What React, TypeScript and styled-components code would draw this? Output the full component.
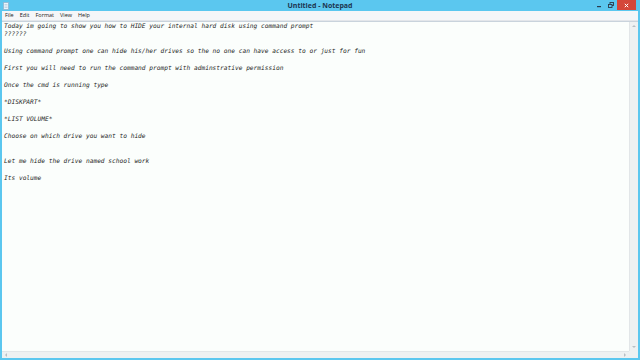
import React from "react";
import styled, { createGlobalStyle } from "styled-components";

const Global = createGlobalStyle`
  html, body { margin: 0; padding: 0; width: 640px; height: 360px; overflow: hidden; background: #5bc7ef; }
  #root { width: 640px; height: 360px; }
`;

const Window = styled.div`
  width: 640px;
  height: 360px;
  display: flex;
  flex-direction: column;
  background: #5bc7ef;
  font-family: "Open Sans", "Liberation Sans", sans-serif;
  box-sizing: border-box;
  padding: 0 2px 2px 2px;
`;

const TitleBar = styled.div`
  height: 11px;
  flex: none;
  display: grid;
  grid-template-columns: 60px 1fr 60px;
  align-items: center;
  margin: 0 -2px;
`;

const AppIcon = styled.div`
  display: flex;
  align-items: center;
  padding-left: 3px;
`;

const Title = styled.div`
  text-align: center;
  font-size: 7px;
  font-weight: 700;
  color: #1c3550;
  line-height: 11px;
`;

const Controls = styled.div`
  display: flex;
  justify-content: flex-end;
  align-items: flex-start;
  height: 11px;
  padding-right: 4px;
`;

const CtrlButton = styled.div<{ $close?: boolean }>`
  width: ${(p) => (p.$close ? "19px" : "12px")};
  height: 10px;
  background: ${(p) => (p.$close ? "#d4473a" : "transparent")};
  display: flex;
  align-items: center;
  justify-content: center;
`;

const MenuBar = styled.div`
  height: 9px;
  flex: none;
  background: #f5f6f8;
  display: flex;
  align-items: center;
  padding-left: 0;
  border-bottom: 1px solid #e3e6ea;
`;

const MenuItem = styled.span`
  font-size: 5.5px;
  color: #222;
  padding: 0 3px;
  line-height: 9px;
`;

const Body = styled.div`
  flex: 1;
  display: grid;
  grid-template-columns: 1fr 9px;
  grid-template-rows: 1fr 7px;
  background: #fbfefc;
  border-top: 1px solid #c9d3dc;
  min-height: 0;
`;

const TextArea = styled.pre`
  margin: 0;
  padding: 0 2px;
  font-family: "DejaVu Sans Mono", "Liberation Mono", monospace;
  font-style: italic;
  font-size: 6.2px;
  line-height: 8.45px;
  color: #1e1e1e;
  white-space: pre;
  overflow: hidden;
`;

const VScroll = styled.div`
  background: #eef1f2;
  border-left: 1px solid #e2e6e8;
  display: flex;
  flex-direction: column;
  justify-content: space-between;
  align-items: center;
  padding: 3px 0;
`;

const HScroll = styled.div`
  background: #eef1f2;
  border-top: 1px solid #e2e6e8;
  display: flex;
  justify-content: space-between;
  align-items: center;
  padding: 0 3px;
`;

const Corner = styled.div`
  background: #eef1f2;
`;

const Arrow = styled.div<{ $dir: "up" | "down" | "left" | "right" }>`
  width: 0;
  height: 0;
  ${(p) =>
    p.$dir === "up"
      ? "border-left: 2px solid transparent; border-right: 2px solid transparent; border-bottom: 2px solid #b8bfc4;"
      : p.$dir === "down"
      ? "border-left: 2px solid transparent; border-right: 2px solid transparent; border-top: 2px solid #b8bfc4;"
      : p.$dir === "left"
      ? "border-top: 2px solid transparent; border-bottom: 2px solid transparent; border-right: 2px solid #b8bfc4;"
      : "border-top: 2px solid transparent; border-bottom: 2px solid transparent; border-left: 2px solid #b8bfc4;"}
`;

const text = `Today im going to show you how to HIDE your internal hard disk using command prompt
??????

Using command prompt one can hide his/her drives so the no one can have access to or just for fun

First you will need to run the command prompt with adminstrative permission

Once the cmd is running type

*DISKPART*

*LIST VOLUME*

Choose on which drive you want to hide


Let me hide the drive named school work

Its volume`;

export default function App() {
  return (
    <>
      <Global />
      <Window>
        <TitleBar>
          <AppIcon>
            <svg width="6" height="8" viewBox="0 0 6 8">
              <rect x="0.5" y="0.5" width="5" height="7" fill="#eaf4fb" stroke="#8fb6d2" strokeWidth="0.8" />
              <line x1="1.5" y1="2.5" x2="4.5" y2="2.5" stroke="#9bbbd3" strokeWidth="0.5" />
              <line x1="1.5" y1="4" x2="4.5" y2="4" stroke="#9bbbd3" strokeWidth="0.5" />
              <line x1="1.5" y1="5.5" x2="4.5" y2="5.5" stroke="#9bbbd3" strokeWidth="0.5" />
            </svg>
          </AppIcon>
          <Title>Untitled - Notepad</Title>
          <Controls>
            <CtrlButton>
              <svg width="6" height="6" viewBox="0 0 6 6">
                <rect x="1" y="4" width="4" height="1.2" fill="#2a3b4c" />
              </svg>
            </CtrlButton>
            <CtrlButton>
              <svg width="6" height="6" viewBox="0 0 6 6">
                <rect x="2" y="0.5" width="3.5" height="3" fill="none" stroke="#2a3b4c" strokeWidth="0.9" />
                <rect x="0.5" y="2.5" width="3.5" height="3" fill="#5bc7ef" stroke="#2a3b4c" strokeWidth="0.9" />
              </svg>
            </CtrlButton>
            <CtrlButton $close>
              <svg width="5" height="5" viewBox="0 0 5 5">
                <path d="M0.8 0.8 L4.2 4.2 M4.2 0.8 L0.8 4.2" stroke="#ffffff" strokeWidth="1" />
              </svg>
            </CtrlButton>
          </Controls>
        </TitleBar>
        <MenuBar>
          <MenuItem>File</MenuItem>
          <MenuItem>Edit</MenuItem>
          <MenuItem>Format</MenuItem>
          <MenuItem>View</MenuItem>
          <MenuItem>Help</MenuItem>
        </MenuBar>
        <Body>
          <TextArea>{text}</TextArea>
          <VScroll>
            <Arrow $dir="up" />
            <Arrow $dir="down" />
          </VScroll>
          <HScroll>
            <Arrow $dir="left" />
            <Arrow $dir="right" />
          </HScroll>
          <Corner />
        </Body>
      </Window>
    </>
  );
}
